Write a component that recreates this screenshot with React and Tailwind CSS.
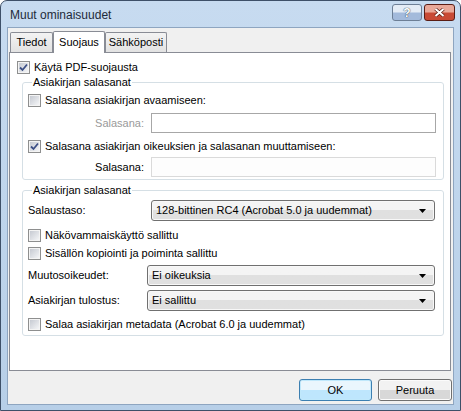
import React from "react";

const CheckBox = ({ checked }) => (
  <span className="w-[13px] h-[13px] shrink-0 border border-[#8e8f8f] bg-[#f4f4f4] p-[1px] flex">
    <span className="flex-1 bg-gradient-to-br from-[#c6cad2] to-[#f4f5f7] flex items-center justify-center">
      {checked && (
        <svg width="9" height="9" viewBox="0 0 9 9">
          <path d="M1 4.5 L3.5 7 L8 1.5" fill="none" stroke="#3c4f86" strokeWidth="1.8" />
        </svg>
      )}
    </span>
  </span>
);

const CheckRow = ({ checked, label, className = "" }) => (
  <div className={`flex items-center h-[14px] gap-[4px] ${className}`}>
    <CheckBox checked={checked} />
    <span className="leading-[14px]">{label}</span>
  </div>
);

const Select = ({ value, className = "" }) => (
  <div
    className={`h-[21px] flex items-center border border-[#707070] rounded-[3px] bg-gradient-to-b from-[#f4f4f4] from-50% to-[#e0e0e0] to-50% shadow-[inset_0_0_0_1px_#f8f8f8] pl-[4px] pr-[8px] ${className}`}
  >
    <span className="flex-1">{value}</span>
    <svg width="7" height="4" viewBox="0 0 7 4">
      <path d="M0 0 H7 L3.5 4 Z" fill="#000" />
    </svg>
  </div>
);

const Tab = ({ label, active, width }) =>
  active ? (
    <div
      className={`${width} h-[22px] relative z-10 -mb-[1px] bg-white border border-b-0 border-[#898c95] rounded-t-[2px] flex items-start justify-center pt-[2px]`}
    >
      {label}
    </div>
  ) : (
    <div
      className={`${width} h-[20px] bg-gradient-to-b from-[#f3f3f3] to-[#e2e2e2] border border-b-0 border-[#898c95] rounded-t-[2px] flex items-center justify-center`}
    >
      {label}
    </div>
  );

const Group = ({ title, className = "", children }) => (
  <fieldset
    className={`border border-[#d5dfe5] rounded-[3px] ml-[12px] mr-[6px] pl-[5px] pr-[7px] ${className}`}
  >
    <legend className="ml-[4px] px-[1px] leading-[14px]">{title}</legend>
    {children}
  </fieldset>
);

export default function App() {
  return (
    <div className="w-[461px] h-[411px] flex flex-col border border-[#3e5068] rounded-t-[7px] bg-gradient-to-b from-[#c7dbf0] to-[#b7cfe8] font-['Liberation_Sans',Arial,sans-serif] text-[11px] text-black overflow-hidden">
      <div className="h-[26px] flex items-center justify-between pl-[9px] pr-[5px] shrink-0">
        <span className="text-[12px] text-[#1e2a3a] mt-[1px]">Muut ominaisuudet</span>
        <div className="flex gap-[2px] -mt-[3px]">
          <div className="w-[30px] h-[17px] rounded-[3px] border border-[#6d7f96] bg-gradient-to-b from-[#e4ecf6] from-45% to-[#a3badb] to-55% flex items-center justify-center text-[12px] font-bold text-white [text-shadow:0_0_1px_#33445a,0_0_1px_#33445a]">
            ?
          </div>
          <div className="w-[31px] h-[17px] rounded-[3px] border border-[#5a1d14] bg-gradient-to-b from-[#e9a898] from-45% to-[#c84a35] to-55% flex items-center justify-center">
            <svg width="11" height="9" viewBox="0 0 11 9">
              <path d="M1.5 1 L9.5 8 M9.5 1 L1.5 8" stroke="#5a1d14" strokeWidth="3.4" />
              <path d="M1.5 1 L9.5 8 M9.5 1 L1.5 8" stroke="#fff" strokeWidth="2" />
            </svg>
          </div>
        </div>
      </div>

      <div className="flex-1 mx-[6px] mb-[5px] border border-[#8ea5c0] bg-[#f0f0f0] flex flex-col">
        <div className="flex items-end ml-[2px] pt-[3px]">
          <Tab label="Tiedot" width="w-[43px]" />
          <Tab label="Suojaus" width="w-[52px]" active />
          <Tab label="Sähköposti" width="w-[62px]" />
        </div>

        <div className="h-[319px] ml-[1px] mr-[2px] border border-[#898c95] bg-white flex flex-col">
          <CheckRow checked label="Käytä PDF-suojausta" className="mt-[7px] ml-[7px]" />

          <Group title="Asiakirjan salasanat" className="mt-[1px] pb-[2px]">
            <CheckRow label="Salasana asiakirjan avaamiseen:" className="mt-[4px]" />
            <div className="flex items-center mt-[6px] h-[20px]">
              <span className="w-[116px] text-right text-[#9a9a9a]">Salasana:</span>
              <div className="ml-[7px] flex-1 h-[20px] border border-[#a7a7a7] bg-white" />
            </div>
            <CheckRow
              checked
              label="Salasana asiakirjan oikeuksien ja salasanan muuttamiseen:"
              className="mt-[6px]"
            />
            <div className="flex items-center mt-[4px] h-[20px]">
              <span className="w-[116px] text-right">Salasana:</span>
              <div className="ml-[7px] flex-1 h-[20px] border border-[#dadada] bg-[#fdfdfd]" />
            </div>
          </Group>

          <Group title="Asiakirjan salasanat" className="mt-[3px] pb-[4px]">
            <div className="flex items-center mt-[3px]">
              <span className="w-[123px]">Salaustaso:</span>
              <Select value="128-bittinen RC4 (Acrobat 5.0 ja uudemmat)" className="flex-1 mr-[1px]" />
            </div>
            <CheckRow label="Näkövammaiskäyttö sallittu" className="mt-[7px]" />
            <CheckRow label="Sisällön kopiointi ja poiminta sallittu" className="mt-[4px]" />
            <div className="flex items-center mt-[5px]">
              <span className="w-[119px]">Muutosoikeudet:</span>
              <Select value="Ei oikeuksia" className="flex-1 mr-[1px]" />
            </div>
            <div className="flex items-center mt-[4px]">
              <span className="w-[119px]">Asiakirjan tulostus:</span>
              <Select value="Ei sallittu" className="flex-1 mr-[1px]" />
            </div>
            <CheckRow
              label="Salaa asiakirjan metadata (Acrobat 6.0 ja uudemmat)"
              className="mt-[6px]"
            />
          </Group>
        </div>

        <div className="flex justify-end gap-[6px] mt-[8px] mr-[1px]">
          <button className="w-[73px] h-[22px] rounded-[3px] border border-[#3c7fb1] bg-gradient-to-b from-[#eaf6fd] from-50% to-[#bee6fd] to-50% shadow-[inset_0_0_0_1px_#c0e8fb]">
            OK
          </button>
          <button className="w-[74px] h-[22px] rounded-[3px] border border-[#707070] bg-gradient-to-b from-[#f2f2f2] from-50% to-[#d8d8d8] to-50% shadow-[inset_0_0_0_1px_#fbfbfb]">
            Peruuta
          </button>
        </div>
      </div>
    </div>
  );
}
